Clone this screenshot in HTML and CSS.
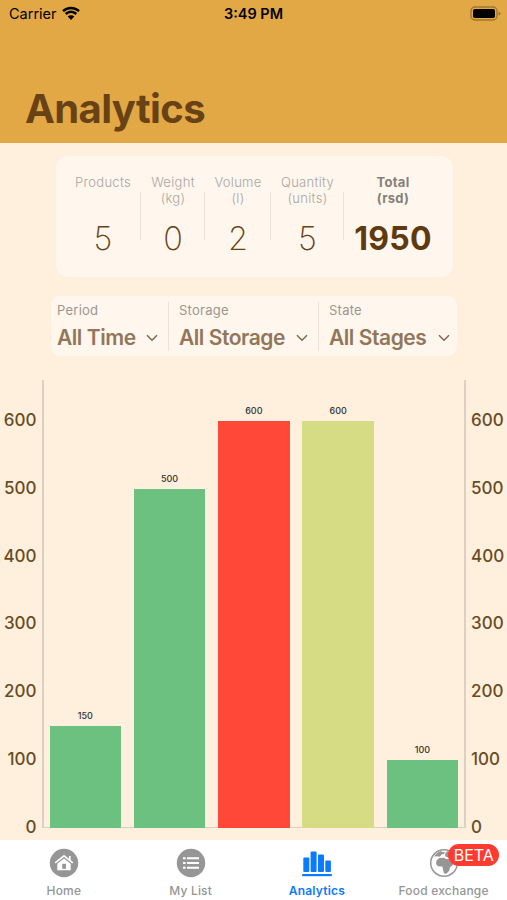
FILE: index.html
```html
<!DOCTYPE html>
<html lang="en">
<head>
  <meta charset="UTF-8">
  <title>Analytics</title>
  <link rel="stylesheet" href="styles.css">
</head>
<body>
  <header class="header">
    <div class="status">
      <div class="carrier">
        <span>Carrier</span>
        <svg width="18" height="14" viewBox="0 0 18 14">
          <path d="M1 5.2a11.4 11.4 0 0 1 16 0M3.7 8a7.5 7.5 0 0 1 10.6 0" fill="none" stroke="#000" stroke-width="2.5"/>
          <path d="M9 14 5.7 10.5a4.7 4.7 0 0 1 6.6 0z"/>
        </svg>
      </div>
      <span class="time">3:49 PM</span>
      <svg class="battery" width="31" height="15" viewBox="0 0 31 15">
        <rect x="1" y="1" width="26" height="13" rx="4" fill="none" stroke="#a1762f" stroke-width="1.4"/>
        <rect x="3" y="3" width="22" height="9" rx="1.8"/>
        <path d="M28.5 5.5q2 .5 2 2t-2 2z" fill="#a1762f"/>
      </svg>
    </div>
    <h1>Analytics</h1>
  </header>

  <main>
    <section class="summary">
      <div class="stat"><p>Products</p><span>5</span></div>
      <div class="stat"><p>Weight<br>(kg)</p><span>0</span></div>
      <div class="stat"><p>Volume<br>(l)</p><span>2</span></div>
      <div class="stat"><p>Quantity<br>(units)</p><span>5</span></div>
      <div class="stat total"><p>Total<br>(rsd)</p><span>1950</span></div>
    </section>

    <section class="filters">
      <div class="filter">
        <label>Period</label>
        <div class="value">All Time <svg width="12" height="8" viewBox="0 0 12 8"><path d="m1 1.3 5 5 5-5"/></svg></div>
      </div>
      <div class="filter">
        <label>Storage</label>
        <div class="value">All Storage <svg width="12" height="8" viewBox="0 0 12 8"><path d="m1 1.3 5 5 5-5"/></svg></div>
      </div>
      <div class="filter">
        <label>State</label>
        <div class="value">All Stages <svg width="12" height="8" viewBox="0 0 12 8"><path d="m1 1.3 5 5 5-5"/></svg></div>
      </div>
    </section>

    <section class="chart">
      <div class="axis left">
        <span>600</span><span>500</span><span>400</span><span>300</span><span>200</span><span>100</span><span>0</span>
      </div>
      <div class="plot">
        <div class="item"><span>150</span><div class="bar green" style="height: 101.6px"></div></div>
        <div class="item"><span>500</span><div class="bar green" style="height: 338.8px"></div></div>
        <div class="item"><span>600</span><div class="bar red" style="height: 406.6px"></div></div>
        <div class="item"><span>600</span><div class="bar lime" style="height: 406.6px"></div></div>
        <div class="item"><span>100</span><div class="bar green" style="height: 67.8px"></div></div>
      </div>
      <div class="axis right">
        <span>600</span><span>500</span><span>400</span><span>300</span><span>200</span><span>100</span><span>0</span>
      </div>
    </section>
  </main>

  <nav class="tabs">
    <div class="tab">
      <svg width="30" height="30" viewBox="0 0 30 30">
        <circle cx="15" cy="15" r="14.2" fill="#969696"/>
        <path d="M6.2 14.8 15 7.8l8.8 7M20.8 8v4.4" fill="none" stroke="#fff" stroke-width="1.7"/>
        <path d="m15 10.6 6.7 5.2v6.5H8.3v-6.5z" fill="#fff"/>
        <path d="M13.2 15.8h3.8v5h-3.8z" fill="#969696"/>
      </svg>
      <span>Home</span>
    </div>
    <div class="tab">
      <svg width="30" height="30" viewBox="0 0 30 30">
        <circle cx="15" cy="15" r="14.2" fill="#969696"/>
        <path d="M7 10.2h2.6M11 10.2h12M7 15h2.6M11 15h12M7 19.8h2.6M11 19.8h12" stroke="#fff" stroke-width="2.1"/>
      </svg>
      <span>My List</span>
    </div>
    <div class="tab active">
      <svg width="30" height="30" viewBox="0 0 30 30">
        <g fill="#0a7aff">
          <rect x="1.3" y="9.5" width="6" height="14.5" rx="1"/>
          <rect x="8.6" y="3.4" width="6" height="20.6" rx="1"/>
          <rect x="16" y="6.6" width="6" height="17.4" rx="1"/>
          <rect x="23.3" y="12.6" width="5.6" height="11.4" rx="1"/>
          <rect x="0.2" y="26" width="29.6" height="2.2"/>
        </g>
      </svg>
      <span>Analytics</span>
    </div>
    <div class="tab">
      <svg width="30" height="30" viewBox="0 0 30 30">
        <circle cx="15" cy="15" r="13.3" fill="#fff" stroke="#969696" stroke-width="1.5"/>
        <g fill="#969696">
          <path d="M5 8.5Q8 4 12 3l1.5 1.3 2.5-.6-1 2.3-2.5.6L11 8.8 8 8.2z"/>
          <path d="m16 6 2-2.8 5 2 4.3 6-3.3-.4-2-1.6-3 .4-2.6-1.2z"/>
          <path d="m7.5 12.5 2.8-2.6 4.7-.2 2 1.3 4 .3 1.5 3.2 2.2.5-1.4 2.5-2.5 2-.4 3-3 3.3-2.4-.4-1-4-.6-3-4.4-.2L7 16z"/>
        </g>
      </svg>
      <span>Food exchange</span>
      <b class="badge">BETA</b>
    </div>
  </nav>
</body>
</html>
```
FILE: styles.css
```css
* {
  box-sizing: border-box;
}

body {
  margin: 0;
  height: 900px;
  display: flex;
  flex-direction: column;
  overflow: hidden;
  background: #ffefdd;
  font-family: Inter, "Liberation Sans", sans-serif;
}

.header {
  height: 143px;
  background: #e2a845;
}

.status {
  display: grid;
  grid-template-columns: 1fr auto 1fr;
  align-items: center;
  height: 27px;
  padding: 0 6px 0 9px;
  font-size: 14.5px;
  color: #000;
}

.carrier {
  display: flex;
  align-items: center;
  gap: 5px;
}

.carrier svg {
  margin-top: -2px;
}

.time {
  margin-right: 3px;
  font-weight: 600;
}

.battery {
  justify-self: end;
}

h1 {
  margin: 57px 0 0 25px;
  font-size: 40px;
  line-height: 50px;
  font-weight: 700;
  letter-spacing: -0.6px;
  color: #684214;
}

main {
  flex: 1;
}

.summary {
  display: grid;
  grid-template-columns: 76px 64px 66px 73px 98px;
  width: 397px;
  height: 121px;
  margin: 13px 0 0 56px;
  padding: 18px 9px;
  border-radius: 12px;
  background: #fff7ee;
  text-align: center;
}

.stat {
  display: flex;
  flex-direction: column;
  background: linear-gradient(#eee1d5, #eee1d5) right 18px / 1px 48px no-repeat;
}

.stat p {
  height: 32px;
  margin: 0;
  font-size: 13px;
  line-height: 16px;
  font-weight: 300;
  letter-spacing: 0.3px;
  color: #aaa5a0;
}

.stat span {
  margin-top: 13px;
  font-size: 32.5px;
  line-height: 40px;
  font-weight: 200;
  color: #684214;
}

.stat.total {
  background: none;
}

.stat.total p {
  font-weight: 700;
  color: #858079;
}

.stat.total span {
  font-size: 32px;
  font-weight: 700;
  letter-spacing: 0.2px;
  color: #5e3a0e;
}

.filters {
  display: grid;
  grid-template-columns: 118px 150px 138px;
  width: 406px;
  height: 60px;
  margin: 19px 0 0 51px;
  border-radius: 9px;
  background: #fff7ee;
}

.filter {
  margin: 6px 0 5px;
  padding-left: 10px;
  border-right: 1px solid #eee1d5;
}

.filter:first-child {
  padding-left: 6px;
}

.filter:last-child {
  border: none;
}

.filter label {
  display: block;
  font-size: 13px;
  line-height: 17px;
  letter-spacing: 0.25px;
  color: #9c958e;
}

.value {
  display: flex;
  align-items: center;
  justify-content: space-between;
  padding-right: 10px;
  margin-top: 6px;
  font-size: 21px;
  line-height: 26px;
  font-weight: 600;
  letter-spacing: -0.45px;
  color: #927659;
}

.filter:last-child .value {
  padding-right: 7px;
}

.value path {
  fill: none;
  stroke: #7c6750;
  stroke-width: 1.5;
}

.chart {
  display: grid;
  grid-template-columns: 42px 424px 41px;
  grid-template-rows: 448px;
  margin-top: 24px;
}

/* labels are centered on the tick lines */
.axis {
  display: flex;
  flex-direction: column;
  height: 448px;
  padding-top: 7px;
  font-size: 17px;
  font-weight: 500;
  color: #684c24;
}

.axis span {
  flex: 0 0 67.75px;
  line-height: 67.75px;
}

.left {
  text-align: right;
  padding-right: 5.5px;
}

.right {
  padding-left: 5px;
}

.plot {
  display: grid;
  grid-template-columns: repeat(5, 71.5px);
  grid-template-rows: 447px;
  column-gap: 12.8px;
  padding-left: 5.5px;
  border: 2px solid #dcd0c3;
  border-width: 0 2px 1px;
}

.item {
  display: flex;
  flex-direction: column;
  justify-content: flex-end;
  margin-bottom: -1px;
}

.item span {
  margin-bottom: 4px;
  text-align: center;
  font-size: 9px;
  line-height: 12px;
  font-weight: 500;
  color: #333;
}

.green {
  background: #6cc180;
}

.red {
  background: #ff4837;
}

.lime {
  background: #d5dc83;
}

.tabs {
  display: grid;
  grid-template-columns: repeat(4, 1fr);
  height: 60px;
  background: #fff;
}

.tab {
  position: relative;
  display: flex;
  flex-direction: column;
  align-items: center;
  padding-top: 8px;
  font-size: 12px;
  line-height: 16px;
  font-weight: 500;
  letter-spacing: 0.2px;
  color: #969696;
}

.tab:first-child,
.tab:nth-child(2) {
  padding-left: 1px;
}

.tab span {
  margin-top: 5px;
}

.tab.active {
  font-weight: 600;
  color: #0a7aff;
}

.badge {
  position: absolute;
  left: 68px;
  top: 4px;
  width: 51px;
  height: 22px;
  border-radius: 11px;
  background: #ff3b30;
  color: #fff;
  font-size: 16px;
  line-height: 22px;
  font-weight: 400;
  letter-spacing: 0;
  text-align: center;
}
```
